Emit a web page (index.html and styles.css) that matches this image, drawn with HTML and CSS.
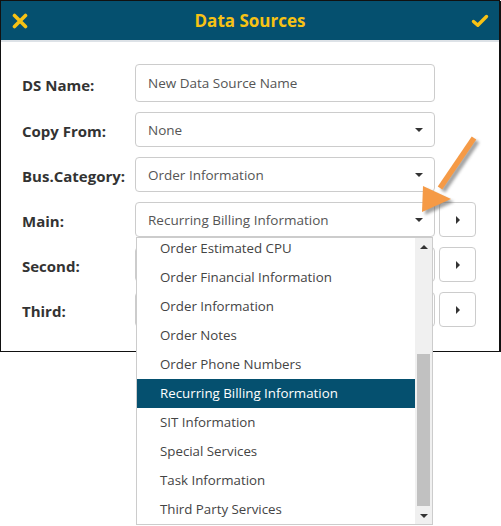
FILE: index.html
```html
<!DOCTYPE html>
<html lang="en">
<head>
  <meta charset="UTF-8" />
  <title>Data Sources</title>
  <link rel="stylesheet" href="styles.css">
</head>
<body>
  <div class="dialog">
    <div class="dialog-head">
      <span class="head-icon">
        <svg width="16" height="16" viewBox="0 0 16 16"><path d="M2.5 2.5 L13.5 13.5 M13.5 2.5 L2.5 13.5" stroke="#f7c214" stroke-width="3.6" stroke-linecap="round"/></svg>
      </span>
      <h2>Data Sources</h2>
      <span class="head-icon">
        <svg width="18" height="16" viewBox="0 0 18 16"><path d="M2.5 8.5 L6.8 12.3 L15.5 3.5" fill="none" stroke="#f7c214" stroke-width="3.4" stroke-linecap="round" stroke-linejoin="round"/></svg>
      </span>
    </div>

    <div class="dialog-body">
      <label>DS Name:</label>
      <div class="field text">New Data Source Name</div>
      <span></span>

      <label>Copy From:</label>
      <div class="field select">None</div>
      <span></span>

      <label>Bus.Category:</label>
      <div class="field select">Order Information</div>
      <span></span>

      <label>Main:</label>
      <div class="field select">Recurring Billing Information</div>
      <button class="side-btn"></button>

      <label>Second:</label>
      <div class="field select"></div>
      <button class="side-btn"></button>

      <label>Third:</label>
      <div class="field select"></div>
      <button class="side-btn"></button>
    </div>
  </div>

  <!-- open list of the Main select -->
  <div class="popup">
    <ul class="options">
      <li>Order Estimated CPU</li>
      <li>Order Financial Information</li>
      <li>Order Information</li>
      <li>Order Notes</li>
      <li>Order Phone Numbers</li>
      <li class="selected">Recurring Billing Information</li>
      <li>SIT Information</li>
      <li>Special Services</li>
      <li>Task Information</li>
      <li>Third Party Services</li>
    </ul>
    <div class="scrollbar">
      <div class="sb-btn up"></div>
      <div class="sb-track"><div class="sb-thumb"></div></div>
      <div class="sb-btn down"></div>
    </div>
  </div>

  <svg class="pointer" width="90" height="100" viewBox="0 0 90 100">
    <defs>
      <filter id="shade" x="-30%" y="-30%" width="160%" height="160%">
        <feGaussianBlur stdDeviation="1.6"/>
      </filter>
    </defs>
    <g transform="translate(3 3)" fill="#666" stroke="#666" opacity="0.6" filter="url(#shade)">
      <line x1="56" y1="8" x2="22" y2="58" stroke-width="5.5"/>
      <polygon points="4,82 5,56 33,69" stroke="none"/>
    </g>
    <g fill="#f59a46" stroke="#f59a46">
      <line x1="56" y1="8" x2="22" y2="58" stroke-width="5.5"/>
      <polygon points="4,82 5,56 33,69" stroke="none"/>
    </g>
  </svg>
</body>
</html>
```

FILE: styles.css
```css
body {
  margin: 0;
  font-family: 'Open Sans', sans-serif;
  background-color: #fff;
  color: #333;
}
.dialog {
  width: 498px;
  border: 1px solid #111;
  box-shadow: 1px 1px 0 #111;
  background-color: #fff;
}
.dialog-head {
  height: 39px;
  background-color: #05506f;
  border-bottom: 2px solid #dde2e7;
  display: flex;
  align-items: center;
  justify-content: space-between;
  padding: 0 10px;
}
.dialog-head h2 {
  margin: 0;
  font-size: 17px;
  font-weight: bold;
  color: #f7c214;
}
.head-icon {
  display: flex;
  width: 18px;
  justify-content: center;
}
.dialog-body {
  display: grid;
  grid-template-columns: 109px 300px 37px;
  grid-template-rows: 38px repeat(5, 35px);
  column-gap: 4px;
  row-gap: 10px;
  padding: 22px 0 24px 21px;
  align-items: center;
}
.dialog-body label {
  font-size: 15px;
  font-weight: bold;
  color: #333;
  padding-top: 3px;
}
.field {
  height: 100%;
  box-sizing: border-box;
  border: 1px solid #ccc;
  border-radius: 4px;
  padding: 0 12px;
  display: flex;
  align-items: center;
  font-size: 13.5px;
  color: #555;
}
.field.select {
  position: relative;
}
.field.select::after {
  content: "";
  position: absolute;
  right: 11px;
  top: 50%;
  margin-top: -2px;
  border-left: 4px solid transparent;
  border-right: 4px solid transparent;
  border-top: 4px solid #333;
}
.side-btn {
  height: 100%;
  width: 37px;
  background-color: #fff;
  border: 1px solid #ccc;
  border-radius: 4px;
  position: relative;
}
.side-btn::after {
  content: "";
  position: absolute;
  left: 16px;
  top: 50%;
  margin-top: -4px;
  border-top: 4px solid transparent;
  border-bottom: 4px solid transparent;
  border-left: 4px solid #333;
}
.popup {
  position: absolute;
  left: 136px;
  top: 237px;
  width: 295px;
  height: 286px;
  border: 1px solid #ccc;
  background-color: #fff;
  display: flex;
  overflow: hidden;
}
.options {
  flex: 1;
  list-style: none;
  margin: -4px 0 0 0;
  padding: 0;
}
.options li {
  height: 29px;
  line-height: 29px;
  padding-left: 23px;
  font-size: 13.3px;
  color: #444;
}
.options li.selected {
  background-color: #05506f;
  color: #fff;
}
.scrollbar {
  width: 17px;
  background-color: #f0f0f0;
  display: flex;
  flex-direction: column;
}
.sb-btn {
  height: 17px;
  display: flex;
  align-items: center;
  justify-content: center;
}
.sb-btn.up::before {
  content: "";
  border-left: 4px solid transparent;
  border-right: 4px solid transparent;
  border-bottom: 4px solid #333;
}
.sb-btn.down::before {
  content: "";
  border-left: 4px solid transparent;
  border-right: 4px solid transparent;
  border-top: 4px solid #333;
}
.sb-track {
  flex: 1;
  padding: 0 2px;
}
.sb-thumb {
  margin-top: 99px;
  height: 152px;
  background-color: #c1c1c1;
}
.pointer {
  position: absolute;
  left: 418px;
  top: 130px;
}
```
